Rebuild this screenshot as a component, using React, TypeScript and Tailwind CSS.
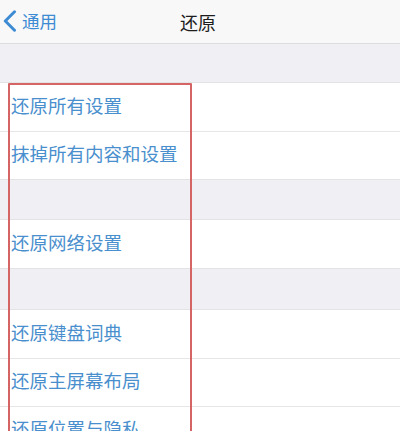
const groups: { label: string; h: number }[][] = [
  [
    { label: '还原所有设置', h: 48 },
    { label: '抹掉所有内容和设置', h: 49 },
  ],
  [{ label: '还原网络设置', h: 48 }],
  [
    { label: '还原键盘词典', h: 48 },
    { label: '还原主屏幕布局', h: 49 },
    { label: '还原位置与隐私', h: 48 },
  ],
]

const gaps = ['h-[38px]', 'h-[39px]', 'h-[40px]']

export default function App() {
  return (
    <div
      className="relative w-[400px] h-[431px] overflow-hidden bg-[#efeff4]"
      style={{ fontFamily: '"Noto Sans CJK SC", "Noto Sans", sans-serif' }}
    >
      {/* Nav bar */}
      <div className="relative h-[44px] bg-[#f8f8f8] border-b border-[#dcdcdf] flex items-center">
        <div className="flex items-center pl-[3px] pb-[1px] text-[#3d8bd3]">
          <svg width="14" height="22" viewBox="0 0 14 22" fill="none" className="mr-[5px]">
            <path d="M11.5 1.8 2.3 11l9.2 9.2" stroke="currentColor" strokeWidth="3" strokeLinecap="round" strokeLinejoin="round" />
          </svg>
          <span className="text-[17.5px] leading-none">通用</span>
        </div>
        <div className="absolute inset-x-0 top-0 h-[43px] flex items-center justify-center pointer-events-none">
          <span className="text-[18px] leading-none text-[#1d1d1d] ml-[-4px]">还原</span>
        </div>
      </div>

      {groups.map((rows, gi) => (
        <div key={gi}>
          <div className={gaps[gi]} />
          <div className="bg-white border-y border-[#e3e3e6]">
            {rows.map((r, ri) => (
              <div
                key={r.label}
                className={`flex items-center pl-[11px] pb-[4px] ${ri > 0 ? 'border-t border-[#e6e6e9]' : ''}`}
                style={{ height: r.h - (ri > 0 ? 1 : 0) }}
              >
                <span className="text-[18.5px] leading-none text-[#4a8fcd]">{r.label}</span>
              </div>
            ))}
          </div>
        </div>
      ))}

      {/* Highlight frame */}
      <div className="absolute left-[8px] top-[83px] w-[184px] h-[400px] border-2 border-[#d56565] rounded-[1px]" />
    </div>
  )
}
